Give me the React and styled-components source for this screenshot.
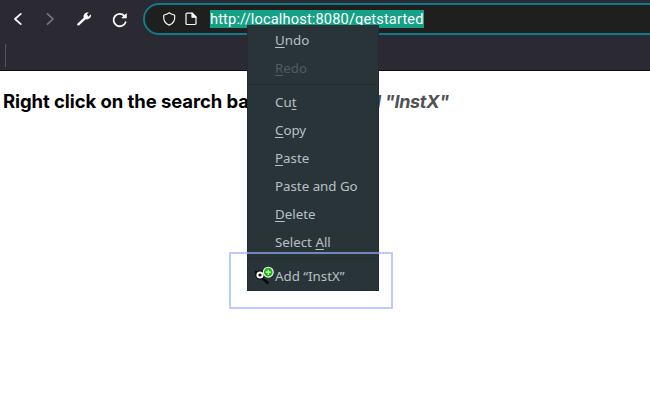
import React from "react";
import styled, { createGlobalStyle } from "styled-components";

const GlobalStyle = createGlobalStyle`
  * { box-sizing: border-box; }
  body { margin: 0; background: #fff; overflow: hidden; }
`;
const Window = styled.div`
  position: relative;
  width: 650px;
  height: 413px;
  overflow: hidden;
  background: #fff;
`;
const Browser = styled.header`
  height: 71px;
  background: #2b2a33;
  border-bottom: 1px solid #0c0c0d;
`;
const Toolbar = styled.div`
  display: flex;
  height: 38px;
  padding-top: 3px;
`;
const Nav = styled.nav`
  display: flex;
  flex: none;
  width: 143px;
  padding: 6px 0 0 8px;
  gap: 14px;
`;
const NavButton = styled.button`
  width: 20px;
  height: 20px;
  padding: 0;
  border: 0;
  background: none;
  color: ${(p) => (p.disabled ? "#77767e" : "#fbfbfe")};
  svg { display: block; }
`;
const AddressBar = styled.div`
  display: flex;
  align-items: center;
  flex: none;
  width: 540px;
  height: 32px;
  padding-left: 17px;
  border: 2px solid #107b8a;
  border-radius: 16px;
  background: #1f1f20;
  svg { flex: none; margin-right: 6px; }
`;
const Url = styled.span`
  height: 18px;
  margin-left: 4px;
  width: 214px;
  white-space: nowrap;
  background: #16a085;
  color: #fff;
  font: 14.6px/18px Roboto, sans-serif;
  letter-spacing: 0.15px;
`;
const Bookmarks = styled.div`
  padding: 6px 0 0 5px;
`;
const Divider = styled.div`
  width: 1px;
  height: 23px;
  background: #55545d;
`;
const Heading = styled.h1`
  display: grid;
  grid-template-columns: 343px 1fr;
  align-items: baseline;
  margin: 19px 0 0 3px;
  color: #000;
  font: 700 18.5px/22px Inter, sans-serif;
  white-space: nowrap;
`;
const Lead = styled.span`
  letter-spacing: -0.08px;
`;
const Emphasis = styled.em`
  color: #515156;
  font-size: 18px;
  letter-spacing: -0.3px;
`;
const Menu = styled.div`
  position: absolute;
  left: 247px;
  top: 25px;
  width: 132px;
  height: 266px;
  padding-top: 1px;
  border: solid #222c31;
  border-width: 0 1px 1px;
  background: #293439;
`;
const MenuItem = styled.div`
  display: flex;
  align-items: center;
  height: 28px;
  padding-left: 6px;
  color: ${(p) => (p.$disabled ? "#505b62" : "#b9c0c3")};
  font: 13.3px/18px "Noto Sans", sans-serif;
  white-space: pre;
`;
const IconSlot = styled.span`
  width: 21px;
  height: 20px;
  svg { display: block; }
`;
const AccessKey = styled.span`
  text-decoration: underline;
  text-decoration-thickness: 1px;
  text-underline-offset: 2px;
  text-decoration-skip-ink: none;
`;
const Separator = styled.div`
  height: 1px;
  margin: 2px 0 3px;
  background: #222c31;
`;
const Highlight = styled.div`
  position: absolute;
  left: 229px;
  top: 252px;
  width: 164px;
  height: 57px;
  border: 2px solid rgba(150, 177, 255, 0.67);
  border-radius: 1px;
`;

const Chevron = ({ right }) => (
  <svg width="20" height="20" viewBox="0 0 20 20" fill="none" stroke="currentColor" strokeWidth="1.7" strokeLinecap="round" strokeLinejoin="round">
    <path d={right ? "M5 4.8 10.5 10 5 15.2" : "M12.8 4.8 7 10l5.8 5.2"} transform={right ? "translate(0.5 0)" : undefined} />
  </svg>
);
const Wrench = () => (
  <svg width="20" height="20" viewBox="0 0 20 20">
    <path d="M1.4 14.8 7.7 8.8C7 6 9 2.9 12.7 3.2L10.9 5.6 12.5 7.4 15 5.2C15.5 8.6 12.7 11 9.7 10.3L3.2 16.3C2 17.2.5 16 1.4 14.8Z" fill="currentColor" />
  </svg>
);
const Reload = () => (
  <svg width="20" height="20" viewBox="0 0 20 20">
    <path d="M15.6 13.2A6.2 6.2 0 1 1 14.4 6.9" fill="none" stroke="currentColor" strokeWidth="1.8" strokeLinecap="round" />
    <path d="M16.4 4.7V9H11.8L13.4 7.3 14.4 6.5Z" fill="currentColor" stroke="currentColor" strokeWidth=".7" strokeLinejoin="round" />
  </svg>
);
const Shield = () => (
  <svg width="16" height="16" viewBox="0 0 16 16" fill="none" stroke="#fbfbfe" strokeWidth="1.15" strokeLinejoin="round">
    <path d="M7.2 1.8C5.5 3.2 3.8 3.6 1.7 4.2C1.3 8.9 3.3 12.8 7.2 14.1C11.1 12.8 13.1 8.9 12.7 4.2C10.6 3.6 8.9 3.2 7.2 1.8Z" />
  </svg>
);
const Page = () => (
  <svg width="16" height="16" viewBox="0 0 16 16" fill="none" stroke="#fbfbfe" strokeWidth="1.2" strokeLinejoin="round">
    <path d="M3 2.2H8.3L12 5.9V13H11.5A1 1 0 0 1 11 13.5H3A1 1 0 0 1 2 12.5V3.2A1 1 0 0 1 3 2.2Z" />
    <path d="M8 2.2V6.2H12Z" fill="#fbfbfe" />
  </svg>
);
const SearchAdd = () => (
  <svg width="21" height="20" viewBox="0 0 21 20">
    <path d="M1 5.5 5 8M8 12l6.5 5.5" stroke="#080b0c" strokeWidth="2.3" />
    <circle cx="6" cy="9" r="4.7" fill="#080b0c" />
    <circle cx="6" cy="9" r="2.6" fill="#080b0c" stroke="#fff" strokeWidth="2" />
    <circle cx="14.3" cy="6.2" r="4.9" fill="#12bc00" stroke="#fff" strokeWidth="1.1" />
    <path d="M14.3 3.7v5M11.8 6.2h5" stroke="#fff" strokeWidth="1.3" />
  </svg>
);

const Item = ({ before = "", accessKey, after = "", disabled, icon }) => (
  <MenuItem $disabled={disabled}>
    <IconSlot>{icon}</IconSlot>
    <span>{before}{accessKey && <AccessKey>{accessKey}</AccessKey>}{after}</span>
  </MenuItem>
);

export default function App() {
  return (
    <>
      <GlobalStyle />
      <Window>
        <Browser>
          <Toolbar>
            <Nav>
              <NavButton aria-label="Back"><Chevron /></NavButton>
              <NavButton aria-label="Forward" disabled><Chevron right /></NavButton>
              <NavButton aria-label="Tools"><Wrench /></NavButton>
              <NavButton aria-label="Reload"><Reload /></NavButton>
            </Nav>
            <AddressBar>
              <Shield />
              <Page />
              <Url>http://localhost:8080/getstarted</Url>
            </AddressBar>
          </Toolbar>
          <Bookmarks><Divider /></Bookmarks>
        </Browser>
        <Heading>
          <Lead>Right click on the search bar and</Lead>
          <Emphasis>Add "InstX"</Emphasis>
        </Heading>
        <Menu>
          <Item accessKey="U" after="ndo" />
          <Item accessKey="R" after="edo" disabled />
          <Separator />
          <Item before="Cu" accessKey="t" />
          <Item accessKey="C" after="opy" />
          <Item accessKey="P" after="aste" />
          <Item before="Paste and Go" />
          <Item accessKey="D" after="elete" />
          <Item before="Select " accessKey="A" after="ll" />
          <Separator />
          <Item before="Add “InstX”" icon={<SearchAdd />} />
        </Menu>
        <Highlight />
      </Window>
    </>
  );
}
